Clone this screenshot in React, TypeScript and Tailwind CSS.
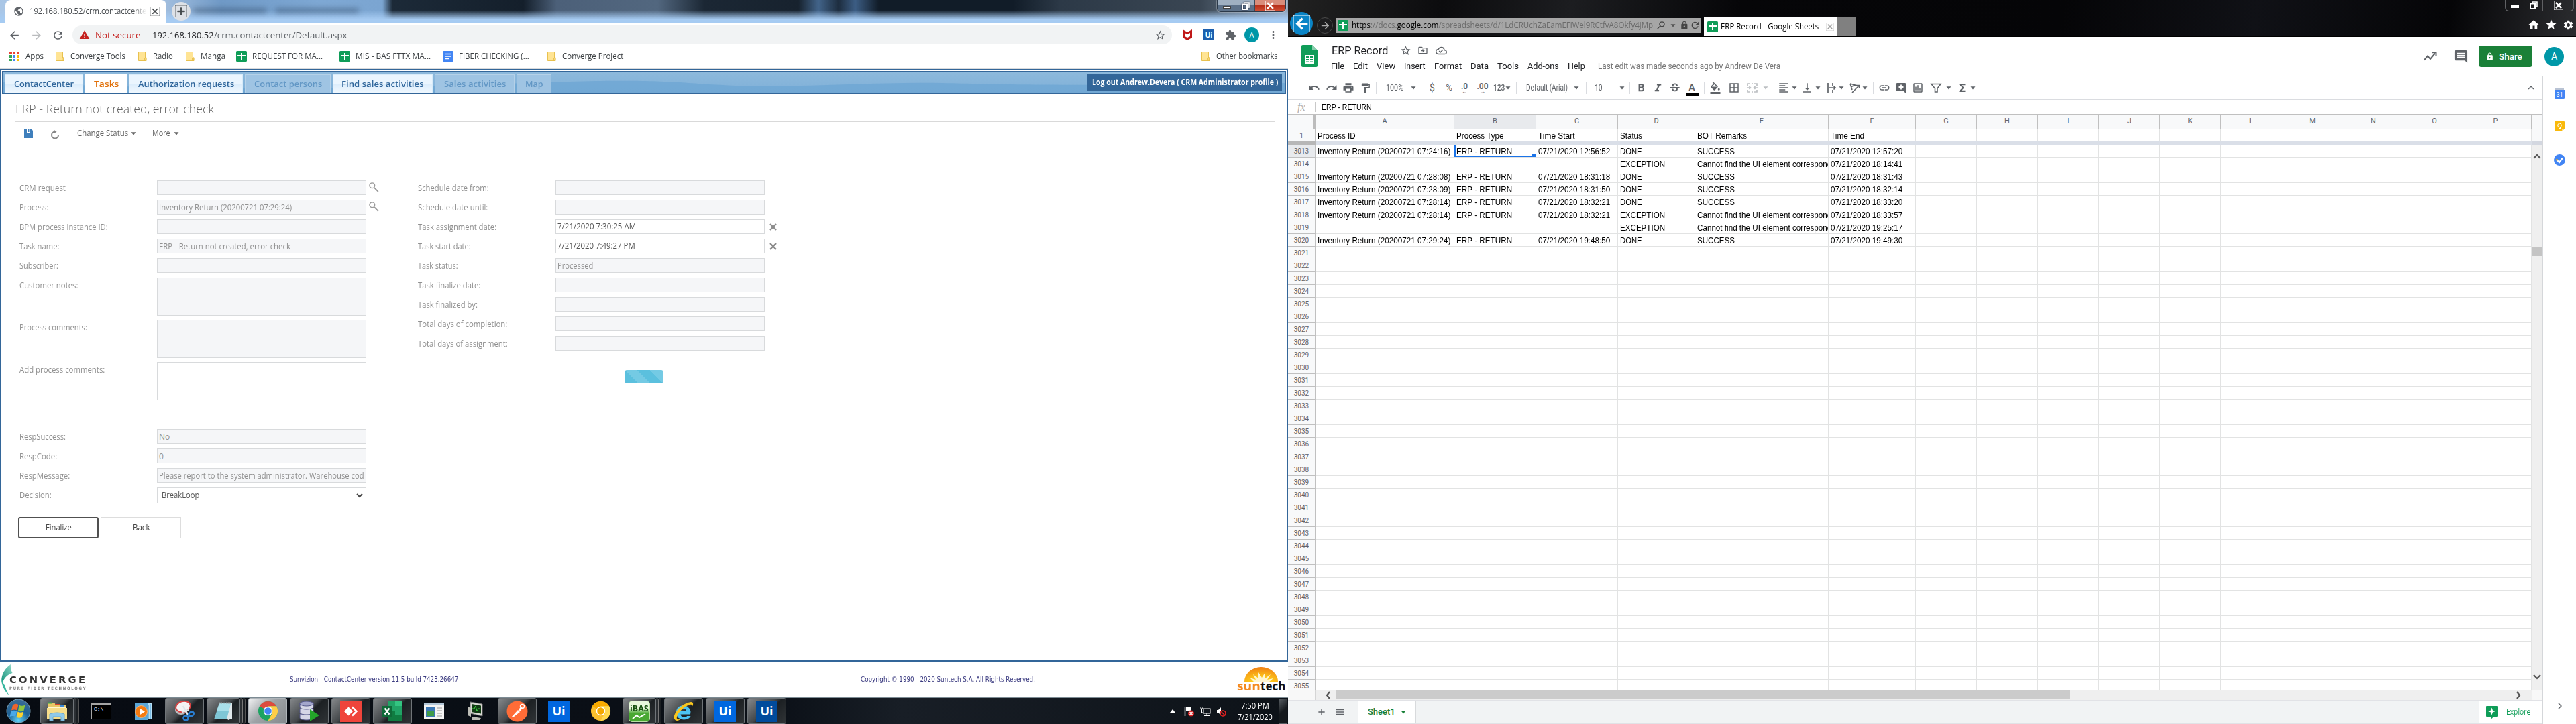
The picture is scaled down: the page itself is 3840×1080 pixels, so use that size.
import React, { useLayoutEffect, useRef, useState } from "react";
import {
  MdUndo, MdRedo, MdPrint, MdFormatPaint, MdFormatBold, MdFormatItalic, MdStrikethroughS,
  MdFormatColorFill, MdBorderAll, MdFormatAlignLeft, MdVerticalAlignBottom, MdInsertLink,
  MdFunctions, MdStarBorder, MdOutlineDriveFileMove, MdOutlineCloudDone,
  MdComment, MdLock, MdExtension, MdArrowBack, MdArrowForward, MdRefresh, MdMoreVert,
  MdOutlineInsertChart, MdHome, MdStar, MdExpandLess, MdKeyboardArrowRight, MdSearch,
  MdWarning, MdPublic, MdSettings, MdAdd, MdClose, MdMenu,
} from "react-icons/md";

const UI = "font-['Open_Sans','Noto_Sans',sans-serif]";
const ROBOTO = "font-['Roboto',sans-serif]";
const ARIAL = "font-['Liberation_Sans',sans-serif]";

/** Single-line text condensed or widened to occupy exactly w pixels. */
function Fit({ w, className = "", children }: { w: number; className?: string; children: React.ReactNode }) {
  const ref = useRef<HTMLSpanElement>(null);
  const [s, setS] = useState(1);
  useLayoutEffect(() => {
    if (ref.current && ref.current.offsetWidth) setS(w / ref.current.offsetWidth);
  }, [w]);
  return (
    <span className={"block shrink-0 whitespace-nowrap " + className} style={{ width: w }}>
      <span ref={ref} className="inline-block origin-left align-top" style={{ transform: `scaleX(${s})` }}>{children}</span>
    </span>
  );
}

/* ---------- shared small icons ---------- */
const Folder = ({ className = "" }) => (
  <svg className={"shrink-0 " + className} width="13" height="14" viewBox="0 0 13 14">
    <path d="M.5.5h10v10l1.500-1v4H.5z" fill="#ffe494" stroke="#e8c14f" />
    <path d="M9.500 13.300V9.800l2.300-1.200v4.700z" fill="#f7d674" stroke="#e3b93f" strokeWidth=".7" />
  </svg>
);
const SheetsSmall = ({ className = "" }) => (
  <svg className={"shrink-0 " + className} width="16" height="16" viewBox="0 0 16 16">
    <rect width="16" height="16" rx="1.500" fill="#0f9d58" />
    <path d="M7 3h2v3h5v2H9v5H7V8H2V6h5z" fill="#fff" />
  </svg>
);
const Caret = ({ className = "text-[#5f6368]" }) => (
  <svg className={"shrink-0 " + className} width="8" height="5" viewBox="0 0 8 5"><path d="M0.500 0.300h7L4 4.600z" fill="currentColor" /></svg>
);
const Restore = ({ className = "" }) => (
  <svg className={className} width="12" height="12" viewBox="0 0 12 12" fill="none" stroke="#fff" strokeWidth="1.600"><path d="M4 2.500V1h7v7H9" /><rect x="1" y="3.500" width="7" height="7.500" strokeWidth="2" /></svg>
);

/* ---------- left: Chrome window ---------- */
function ChromeTop() {
  return (
    <div className={UI}>
      <div className="flex h-[34px] bg-[linear-gradient(to_bottom,transparent_45%,#a6cbf2_85%),linear-gradient(to_right,#a9c6e6_0,#9fbcdd_250px,#6f99c6_330px,#7ea8d4_480px,#7ba5d1_570px,#1c2a38_585px,#141f2b_780px,#4c6079_830px,#52677f_980px,#1b2734_1050px,#17222e_1190px,#42648a_1220px,#1d2d3f_1250px,#3c5d84_1275px,#111c28_1310px,#111c28_1510px,#2c3947_1580px,#3a4653_1790px,#8fa2b8_1920px)]">
        <div className="ml-2 flex h-[34px] w-[240px] items-center rounded-t-lg bg-white">
          <MdPublic className="ml-[12px] size-[16px] text-[#5f6368]" />
          <div className="ml-[8px] w-[174px] overflow-hidden [mask-image:linear-gradient(to_right,#000_88%,transparent)]">
            <Fit w={174} className="text-[12px] leading-[18px] text-[#45494d]">192.168.180.52/crm.contactcente</Fit>
          </div>
          <MdClose className="ml-[6px] size-[14px] stroke-[#3c4043] stroke-1 text-[#3c4043]" />
        </div>
        <div className="mt-[3px] ml-2 flex size-[28px] items-center justify-center rounded-full bg-[#dee1e6]">
          <MdAdd className="size-[18px] stroke-[#3c4043] stroke-1 text-[#3c4043]" />
        </div>
        <div className="mt-[13px] ml-1 h-[6px] w-[110px] rounded bg-[#24384f]/50 blur-[4px]" />
        <div className="mt-[13px] ml-3 h-[6px] w-[125px] rounded bg-[#24384f]/50 blur-[4px]" />
        <div className="mr-[3px] ml-auto flex h-[18px] w-[103px] overflow-hidden rounded-b-md border border-t-0 border-[#2c3a4a] shadow-[0_0_2px_#fff]">
          <div className="flex w-[28px] items-center justify-center border-r border-[#3b4959] bg-[linear-gradient(#9fb0c2_50%,#5d728a_50%)]"><span className="mt-1 h-[4px] w-[12px] border border-[#444] bg-white" /></div>
          <div className="flex w-[28px] items-center justify-center border-r border-[#3b4959] bg-[linear-gradient(#9fb0c2_50%,#5d728a_50%)]"><Restore className="drop-shadow-[0_0_1px_#223]" /></div>
          <div className="flex grow items-center justify-center bg-[linear-gradient(#d98d7b_45%,#b8301a_50%,#cf5136)] text-white"><MdClose className="size-[15px] stroke-white stroke-2" /></div>
        </div>
      </div>
      <div className="flex h-[36px] items-center bg-white text-[#5f6368]">
        <MdArrowBack className="ml-[12px] size-[19px] shrink-0" />
        <MdArrowForward className="ml-[14px] size-[19px] shrink-0 text-[#babcbe]" />
        <MdRefresh className="ml-[13px] size-[19px] shrink-0" />
        <div className="ml-[12px] flex h-[28px] w-[1639px] items-center rounded-full bg-[#f1f3f4] text-[13.5px] leading-[20px]">
          <MdWarning className="ml-[10px] size-[16px] text-[#c5221f]" />
          <Fit w={67} className="ml-[8px] text-[#c5221f]">Not secure</Fit>
          <div className="ml-[8px] h-[16px] w-px bg-[#9aa0a6]" />
          <Fit w={92} className="ml-[9px] text-[#202124]">192.168.180.52</Fit>
          <Fit w={198}>/crm.contactcenter/Default.aspx</Fit>
          <MdStarBorder className="mr-[9px] ml-auto size-[17px]" />
        </div>
        <svg className="ml-[16px]" width="14" height="16" viewBox="0 0 14 16"><path d="M0 0l7 4 7-4v12l-7 4-7-4zM3 5v5l4 2 4-2V5L7 7z" fill="#c01818" fillRule="evenodd" /></svg>
        <div className="ml-[17px] flex size-[16px] items-center justify-center bg-[#1b5fae] text-[10px] font-bold text-white">Ui</div>
        <MdExtension className="ml-[16px] size-[17px]" />
        <div className="ml-[12px] flex size-[22px] items-center justify-center rounded-full bg-[#0097a7] text-[11px] text-white">A</div>
        <MdMoreVert className="ml-[12px] size-[18px]" />
      </div>
      <div className="flex h-[33px] items-center border-b border-[#d9dadc] bg-white pb-[4px] text-[12px] leading-[18px] text-[#3c4043]">
        <div className="ml-[14px] grid grid-cols-3 gap-[2px]">
          {["bg-[#ea4335]", "bg-[#ea4335]", "bg-[#ea4335]", "bg-[#34a853]", "bg-[#4285f4]", "bg-[#fbbc04]", "bg-[#34a853]", "bg-[#4285f4]", "bg-[#fbbc04]"].map((c, i) => <i key={i} className={"size-[3.5px] " + c} />)}
        </div>
        <Fit w={27} className="ml-[9px]">Apps</Fit>
        <Folder className="ml-[18px]" /><Fit w={82} className="ml-[9px]">Converge Tools</Fit>
        <Folder className="ml-[19px]" /><Fit w={30} className="ml-[9px]">Radio</Fit>
        <Folder className="ml-[19px]" /><Fit w={37} className="ml-[9px]">Manga</Fit>
        <SheetsSmall className="ml-[16px]" /><Fit w={105} className="ml-[8px]">REQUEST FOR MA...</Fit>
        <SheetsSmall className="ml-[25px]" /><Fit w={112} className="ml-[8px]">MIS - BAS FTTX MA...</Fit>
        <svg className="ml-[18px] shrink-0" width="16" height="16" viewBox="0 0 16 16"><rect width="16" height="16" rx="1.500" fill="#4285f4" /><path d="M3 4.500h10M3 8h10M3 11.500h6" stroke="#fff" strokeWidth="1.600" /></svg>
        <Fit w={105} className="ml-[8px]">FIBER CHECKING (...</Fit>
        <Folder className="ml-[27px]" /><Fit w={91} className="ml-[9px]">Converge Project</Fit>
        <div className="ml-auto h-[16px] w-px bg-[#c6c8ca]" />
        <Folder className="ml-[12px]" /><Fit w={92} className="mr-[15px] ml-[9px]">Other bookmarks</Fit>
      </div>
    </div>
  );
}

type NavTab = { label: string; tw: number; box: string; kind: "on" | "link" | "off" };
const NAV: NavTab[] = [
  { label: "ContactCenter", tw: 89, box: "w-[117px]", kind: "link" },
  { label: "Tasks", tw: 37, box: "w-[62px]", kind: "on" },
  { label: "Authorization requests", tw: 143, box: "w-[170px]", kind: "link" },
  { label: "Contact persons", tw: 101, box: "w-[128px]", kind: "off" },
  { label: "Find sales activities", tw: 123, box: "w-[149px]", kind: "link" },
  { label: "Sales activities", tw: 92, box: "w-[119px]", kind: "off" },
  { label: "Map", tw: 27, box: "w-[52px]", kind: "off" },
];
const NAV_STYLE = {
  on: "bg-white text-[#e17009]",
  link: "border border-b-0 border-[#d8ebf9] bg-[linear-gradient(#eaf5fe_50%,#dcedfb_50%,#f2f9ff)] text-[#30669b]",
  off: "border border-b-0 border-[#b5d1e8] bg-[#9fc4e3] text-[#6297c5]",
};

const HL = "h-px bg-[#d9d9d9]";
const label = "text-[12px] leading-[23px] text-[#919191]";
const box = "h-[22px] w-[312px] shrink-0 overflow-hidden border border-[#d8dadc] bg-[#f5f6f8] pl-[2px] text-[12px] leading-[21px] text-[#919191]";
const editBox = "h-[22px] w-[312px] shrink-0 border border-[#d8dadc] bg-white pl-[2px] text-[12px] leading-[20px] text-[#555]";
const area = "h-[57px] w-[312px] border border-[#d8dadc]";

const Magnifier = () => (
  <svg className="ml-[4px]" width="15" height="15" viewBox="0 0 15 15" fill="none" stroke="#999">
    <circle cx="4.800" cy="4.800" r="3.900" strokeWidth="1.300" /><path d="M7.800 7.800l6 6" strokeWidth="1.900" />
  </svg>
);

function Field({ name, w, value, vw = 0, find }: { name: string; w: number; value?: string; vw?: number; find?: boolean }) {
  return (
    <div className="flex h-[22px]">
      <div className="w-[205px] shrink-0"><Fit w={w} className={label}>{name}</Fit></div>
      <div className={box}>{value && <Fit w={vw}>{value}</Fit>}</div>
      {find && <div className="pt-[3px]"><Magnifier /></div>}
    </div>
  );
}
function AreaField({ name, w, white }: { name: string; w: number; white?: boolean }) {
  return (
    <div className="flex">
      <div className="w-[205px]"><Fit w={w} className={label}>{name}</Fit></div>
      <div className={area + (white ? " bg-white" : " bg-[#f5f6f8]")} />
    </div>
  );
}

const DATES: { n: string; w: number; v?: string; vw?: number; edit?: boolean }[] = [
  { n: "Schedule date from:", w: 106 },
  { n: "Schedule date until:", w: 104 },
  { n: "Task assignment date:", w: 117, v: "7/21/2020 7:30:25 AM", vw: 117, edit: true },
  { n: "Task start date:", w: 79, v: "7/21/2020 7:49:27 PM", vw: 116, edit: true },
  { n: "Task status:", w: 60, v: "Processed", vw: 53 },
  { n: "Task finalize date:", w: 93 },
  { n: "Task finalized by:", w: 89 },
  { n: "Total days of completion:", w: 133 },
  { n: "Total days of assignment:", w: 134 },
];

function Crm() {
  return (
    <div className={"h-[884px] border border-b-2 border-[#336699] bg-white " + UI}>
      <div className="relative mx-[2px] mt-[2px] h-[34px] overflow-hidden border border-[#336699] bg-[linear-gradient(#8db9dc,#7fb0d8)]">
        <svg className="absolute inset-0" width="1914" height="32" viewBox="0 0 1914 32" preserveAspectRatio="none">
          <path d="M0 16C300 28 500 28 750 18S1000 18 1100 21S1300 15 1400 17S1550 22 1914 17V32H0z" fill="#6ea6d3" opacity=".8" />
        </svg>
        <div className="relative flex items-start pt-[4px] pl-[3px]">
          <div className="flex gap-[3px]">
            {NAV.map((t) => (
              <div key={t.label} className={"flex h-[29px] items-center justify-center text-[12px] leading-[18px] font-semibold " + t.box + " " + NAV_STYLE[t.kind]}>
                <Fit w={t.tw}>{t.label}</Fit>
              </div>
            ))}
          </div>
          <div className="-mt-[1px] mr-[5px] ml-auto flex h-[26px] w-[290px] items-center justify-center bg-[#336699] text-[12px] leading-[16px] font-bold text-white">
            <Fit w={277}><span className="underline">Log out Andrew.Devera ( CRM Administrator profile )</span></Fit>
          </div>
        </div>
      </div>
      <div className="mr-[19px] ml-[22px]">
        <div className="flex h-[41px] items-end pb-[7px]"><Fit w={296} className="text-[17.5px] leading-[24px] font-light text-[#666]">ERP - Return not created, error check</Fit></div>
        <div className={HL} />
        <div className="flex h-[34px] items-center text-[12px] leading-[18px] text-[#666]">
          <svg className="ml-[13px]" width="13" height="13" viewBox="0 0 13 13"><path d="M0 0h4v5h5V0h2l2 2v11H0z" fill="#3f7fbc" /><path d="M5.500 0h2v4h-2z" fill="#3f7fbc" /></svg>
          <svg className="ml-[26px] mt-[2px]" width="14" height="15" viewBox="0 0 14 15" fill="none" stroke="#858585" strokeWidth="2"><path d="M7 3.500a5 5 0 105 5" /><path d="M5 0.500l4.500 3-4.500 3.200z" fill="#858585" stroke="none" /></svg>
          <Fit w={76} className="ml-[26px]">Change Status</Fit>
          <Caret className="ml-[4px] text-[#666]" />
          <Fit w={27} className="ml-[24px]">More</Fit>
          <Caret className="ml-[5px] text-[#666]" />
        </div>
        <div className={HL} />
      </div>
      <div className="mt-[52px] ml-[28px] flex">
        <div className="w-[594px]">
          <div className="flex flex-col gap-[7px]">
            <Field name="CRM request" w={69} find />
            <Field name="Process:" w={43} value="Inventory Return (20200721 07:29:24)" vw={198} find />
            <Field name="BPM process instance ID:" w={132} />
            <Field name="Task name:" w={59} value="ERP - Return not created, error check" vw={196} />
            <Field name="Subscriber:" w={58} />
          </div>
          <div className="mt-[7px] flex flex-col gap-[6px]">
            <AreaField name="Customer notes:" w={87} />
            <AreaField name="Process comments:" w={101} />
            <AreaField name="Add process comments:" w={127} white />
          </div>
          <div className="mt-[43px] flex flex-col gap-[7px]">
            <Field name="RespSuccess:" w={69} value="No" vw={16} />
            <Field name="RespCode:" w={56} value="0" vw={7} />
            <Field name="RespMessage:" w={75} value="Please report to the system administrator. Warehouse cod" vw={306} />
            <div className="flex">
              <div className="w-[205px]"><Fit w={48} className={label}>Decision:</Fit></div>
              <div className="flex h-[24px] w-[312px] items-center border border-[#d8dadc] pl-[6px] text-[12px] leading-[18px] text-[#555]">
                <Fit w={56}>BreakLoop</Fit>
                <svg className="mr-[4px] ml-auto" width="10" height="7" viewBox="0 0 10 7"><path d="M1 1l4 4 4-4" fill="none" stroke="#444" strokeWidth="2" /></svg>
              </div>
            </div>
          </div>
          <div className="mt-[20px] -ml-[2px] flex gap-[3px] text-[12px] leading-[18px] text-[#444]">
            <div className="flex h-[32px] w-[120px] items-center justify-center rounded-[3px] border-2 border-[#505050]"><Fit w={39}>Finalize</Fit></div>
            <div className="flex h-[32px] w-[120px] items-center justify-center border border-[#ddd]"><Fit w={25}>Back</Fit></div>
          </div>
        </div>
        <div>
          <div className="flex flex-col gap-[7px]">
            {DATES.map((d) => (
              <div key={d.n} className="flex h-[22px] items-center">
                <div className="w-[205px]"><Fit w={d.w} className={label}>{d.n}</Fit></div>
                <div className={d.edit ? editBox : box}>{d.v && <Fit w={d.vw ?? 0}>{d.v}</Fit>}</div>
                {d.edit && <svg className="ml-[7px]" width="11" height="11" viewBox="0 0 11 11"><path d="M1 1l9 9M10 1l-9 9" stroke="#8b8b8b" strokeWidth="2.400" /></svg>}
              </div>
            ))}
          </div>
          <div className="mt-[29px] ml-[309px] h-[20px] w-[56px] rounded-[2px] border-b border-[#45a7c8] bg-[repeating-linear-gradient(45deg,#5bc0de_0_13px,#74cae4_13px_26px)]" />
        </div>
      </div>
    </div>
  );
}

function CrmFooter() {
  return (
    <div className="flex h-[53px] items-center bg-white font-['DejaVu_Sans',sans-serif] text-[10px] leading-[15px] text-[#3b3b80]">
      <div className="flex h-[46px] w-[430px] items-center">
        <svg className="ml-[2px] shrink-0" width="20" height="46" viewBox="0 0 20 46">
          <defs><linearGradient id="leaf" x1="0" y1="1" x2="1" y2="0"><stop offset="0" stopColor="#0f8f78" /><stop offset="1" stopColor="#8fd8c8" /></linearGradient></defs>
          <path d="M14 0C3 8-2 19 1.500 31c1-9 6-15 15-18-2-4-3-8-2.500-13z" fill="url(#leaf)" />
          <path d="M.5 20c-.5 12 4 20 11 26-3-5-5-9-6-14C3 29 1 25 .5 20z" fill="#38b7a0" />
        </svg>
        <div className="-ml-[8px] flex flex-col gap-[2px] pt-[9px]">
          <Fit w={116} className="text-[14px] leading-[14px] font-bold tracking-[3px] text-[#333]">CONVERGE</Fit>
          <Fit w={115} className="text-[6px] leading-[7px] font-bold tracking-[2px] text-[#777]">PURE FIBER TECHNOLOGY</Fit>
        </div>
      </div>
      <Fit w={251} className="ml-[2px]">Sunvizion - ContactCenter version 11.5 build 7423.26647</Fit>
      <Fit w={260} className="ml-[600px]">Copyright © 1990 - 2020 Suntech S.A. All Rights Reserved.</Fit>
      <div className="mr-[4px] ml-auto flex flex-col items-center">
        <svg width="50" height="23" viewBox="0 0 50 23">
          <defs><radialGradient id="sun" cx=".5" cy="1" r="1"><stop offset=".2" stopColor="#ffd21a" /><stop offset="1" stopColor="#f07d13" /></radialGradient></defs>
          <path d="M0 23A25 22 0 0150 23z" fill="url(#sun)" />
          <path d="M14 23L8 17l9 3-4-8 8 6 0-9 5 8 5-8 0 9 8-6-5 8 9-2-6 5z" fill="#fff5d0" />
        </svg>
        <div className={"flex h-[16px] text-[17px] leading-[14px] font-bold " + UI}><Fit w={35} className="text-[#f58a1f]">sun</Fit><Fit w={37} className="text-[#111]">tech</Fit></div>
      </div>
    </div>
  );
}

function Slot({ framed, lit, stack, children }: { framed?: boolean; lit?: boolean; stack?: boolean; children: React.ReactNode }) {
  const frame = lit
    ? "border border-[#aeb4b9] bg-[linear-gradient(135deg,#f0f1f2,#9ea3a7_45%,#85898d)]"
    : framed
      ? "border border-[#6f7478] bg-[linear-gradient(135deg,#85888b,#43474a_45%,#1c2023_55%,#303437)]"
      : "border border-transparent";
  return (
    <div className="flex h-[39px] w-[58px]">
      <div className={"flex grow items-center justify-center rounded-[3px] " + frame}>{children}</div>
      {stack && <><div className="w-[4px] rounded-r border-r border-[#777] bg-[#2b2f33]" /><div className="w-[4px] rounded-r border-r border-[#555] bg-[#1b1f23]" /></>}
    </div>
  );
}
const UiTile = ({ dark }: { dark?: boolean }) => (
  <div className={"flex size-[32px] items-center justify-center text-[18px] font-bold text-white " + (dark ? "bg-[#004b9c]" : "bg-[#0067df]")}>Ui</div>
);
const Disc = ({ a, b, c, core }: { a: string; b: string; c: string; core: string }) => (
  <svg width="31" height="31" viewBox="-16 -16 32 32">
    <circle r="15" fill={b} />
    <path d="M0 0L-13 -7.500A15 15 0 0113 -7.500H0z" fill={a} />
    <path d="M0 -7.500H13A15 15 0 010 15L6.500 3.500z" fill={c} />
    <circle r="7" fill="#fff" /><circle r="5.500" fill={core} />
  </svg>
);

function Taskbar() {
  return (
    <div className={"flex h-[40px] border-t border-[#7c8b93] bg-[linear-gradient(to_right,#070b12,#0b1017_60%,#181e26_70%,#0d1218)] " + UI}>
      <div className="flex w-[60px] items-center justify-start pl-[9px]">
        <svg width="37" height="37" viewBox="0 0 37 37">
          <defs><radialGradient id="orb" cx=".5" cy=".9" r=".9"><stop offset="0" stopColor="#5fd0f5" /><stop offset=".5" stopColor="#1c6196" /><stop offset="1" stopColor="#3d6c94" /></radialGradient></defs>
          <circle cx="18.500" cy="18.500" r="17.500" fill="url(#orb)" stroke="#7fa6bb" />
          <path d="M10 9.500q4-3 8.500-.5l-2 8.500q-4-2-8.500 0z" fill="#f0642c" />
          <path d="M19.500 9.500q4 2.500 9 0l-2 8.500q-4 2.500-8.500 0z" fill="#8dc63f" />
          <path d="M7.700 18.800q4-2 8.500 0L14 27q-4-2-8.500 0z" fill="#4aa8e8" />
          <path d="M17.500 19.500q4 2.500 8.500 0l-2 8.300q-4 2-8.500 0z" fill="#fdd12e" />
        </svg>
      </div>
      <div className="flex gap-[4px]">
        <Slot framed stack>
          <svg width="32" height="30" viewBox="0 0 32 30">
            <path d="M2 2h10l2 3h16v22H2z" fill="#e8c766" /><path d="M3 2.500h6" stroke="#2fae4a" strokeWidth="2" /><path d="M13 5h7" stroke="#d9442b" strokeWidth="2" /><path d="M21 7h6" stroke="#3b8ad8" strokeWidth="2" />
            <path d="M3 8h26v16H3z" fill="#fff6cf" /><path d="M1 10h30v17H1z" fill="#f6dd8a" /><path d="M5 29V19q11-4 22 0v10h-5v-6H10v6z" fill="#8fc9ea" stroke="#6ba9cf" />
          </svg>
        </Slot>
        <Slot><div className="h-[25px] w-[30px] border border-t-[3px] border-[#a5a5a5] bg-black pl-[3px] font-['Liberation_Mono',monospace] text-[8px] leading-[14px] text-white">C:\_</div></Slot>
        <Slot>
          <svg width="27" height="28" viewBox="0 0 27 28"><rect x="6" y="1" width="20" height="24" fill="#b6dff5" /><path d="M24 3v22M21 4v22" stroke="#3e95cf" /><rect x="1" y="2" width="19" height="25" fill="#5aa7d8" /><circle cx="10.500" cy="14.500" r="9" fill="#f47b12" stroke="#f7b272" /><path d="M8 9.500l8 5-8 5z" fill="#fff" /></svg>
        </Slot>
        <Slot framed>
          <svg width="32" height="32" viewBox="0 0 32 32"><ellipse cx="11" cy="14" rx="9" ry="7" fill="#b9bcbf" /><ellipse cx="14" cy="9" rx="11" ry="8" transform="rotate(-15 14 9)" fill="#f4f4f4" stroke="#d84343" strokeWidth="2" /><path d="M14 8l7 13M12 17l11-3" stroke="#e2e7ea" strokeWidth="2.500" /><circle cx="18" cy="26" r="3.500" fill="none" stroke="#2a7ed0" strokeWidth="2.600" /><ellipse cx="26" cy="20" rx="4" ry="3" transform="rotate(-30 26 20)" fill="none" stroke="#2a7ed0" strokeWidth="2.600" /></svg>
        </Slot>
        <Slot framed stack>
          <svg width="32" height="30" viewBox="0 0 32 30"><path d="M11 3h18v23l-6 2z" fill="#dfe7ea" /><path d="M10 3h17l-6 24H2z" fill="#7fc6d6" /><path d="M10 3h17l-3 11H6z" fill="#a9dfea" /><path d="M10 2.500h17" stroke="#999" strokeWidth="2" strokeDasharray="1.500 1" /></svg>
        </Slot>
        <Slot lit><Disc a="#dd4b3e" b="#1da362" c="#ffcd46" core="#4285f4" /></Slot>
        <Slot framed>
          <svg width="32" height="32" viewBox="0 0 32 32"><g fill="#d5d6e6" stroke="#54578a"><path d="M2 20v6c0 4 20 4 20 0v-6z" /><path d="M2 12v6c0 4 20 4 20 0v-6z" /><path d="M2 4v6c0 4 20 4 20 0V4z" /><ellipse cx="12" cy="4.500" rx="10" ry="3.500" fill="#a3a6cc" /></g><path d="M17 13l14 9-14 9z" fill="#24a52a" /></svg>
        </Slot>
        <Slot framed>
          <div className="flex size-[32px] items-center justify-center bg-[#ef443b]"><svg width="22" height="16" viewBox="0 0 22 16"><path d="M7.500 1.500L14 8l-6.500 6.500L1 8z" fill="#fff" /><path d="M13 1.500L19.500 8 13 14.500" fill="none" stroke="#fff" strokeWidth="2.500" /></svg></div>
        </Slot>
        <Slot framed>
          <svg width="32" height="31" viewBox="0 0 32 31"><path d="M9 1h22v29H9z" fill="#21a366" /><path d="M20 1h11v7H20z" fill="#33c481" /><path d="M9 15h22v15H9z" fill="#107c41" /><path d="M20 15h11v7H20z" fill="#21a366" /><rect y="8" width="16" height="16" fill="#0f6a38" /><path d="M4.500 11.500l7 9M11.500 11.500l-7 9" stroke="#fff" strokeWidth="2.200" /></svg>
        </Slot>
        <Slot>
          <svg width="30" height="25" viewBox="0 0 30 25"><rect width="30" height="25" fill="#f4f4f4" /><rect width="30" height="3" fill="#b3c7d8" /><rect x="3" y="6" width="13" height="15" fill="#3c78b5" /><rect x="4" y="13" width="11" height="7" fill="#3f9b4a" /><path d="M19 8h8M19 12h8M19 16h8M19 20h8" stroke="#999" /></svg>
        </Slot>
        <Slot>
          <svg width="30" height="30" viewBox="0 0 30 30"><path d="M7 1l18 3v18L7 18z" fill="#d8d8d2" stroke="#777" /><path d="M9 4l14 2.500v12L9 16z" fill="#103a12" /><path d="M10 11h3l2-4 2 8 2-4h3" fill="none" stroke="#42d742" /><path d="M3 8l5 2v13l-5-2zM10 23l13 2-2 3H9z" fill="#bdbdb6" /></svg>
        </Slot>
        <Slot framed>
          <svg width="32" height="32" viewBox="0 0 32 32"><circle cx="16" cy="16" r="15.500" fill="#ff6c37" /><path d="M7 25l10-11 3 3-9 7zM18 13l4-4 2 2-4 5z" fill="#fff" /><circle cx="23.500" cy="8.500" r="3" fill="none" stroke="#fff" strokeWidth="1.400" /></svg>
        </Slot>
        <Slot><UiTile /></Slot>
        <Slot><Disc a="#f9ab00" b="#fbc02d" c="#ffd94f" core="#f4a900" /></Slot>
        <Slot framed stack>
          <div className="flex h-[32px] w-[32px] flex-col items-center rounded-[5px] border border-[#b9e0a4] bg-[linear-gradient(#e6f7dc_35%,#49a832_60%)] pt-[4px] text-[12px] leading-[14px] font-bold text-[#14500f]">
            <Fit w={28}>iBAS</Fit>
            <svg width="22" height="9" viewBox="0 0 22 9"><path d="M1 8l6-5 4 3 9-5" fill="none" stroke="#fff" strokeWidth="2" /></svg>
          </div>
        </Slot>
        <Slot framed>
          <svg width="32" height="32" viewBox="0 0 32 32"><path d="M26 20.500H11.500c.5 5 7.500 6 9.500 2.500h5.500C24 30.500 5 31.500 5 17.500S25 4.500 26.500 16.500zM11.500 15H20c-.5-4.500-8-4.500-8.500 0z" fill="#4cc3f2" /><path d="M2 27C-1 20 14 3 27 2c4 0 4 4 1 8 1-4 0-5-3-4C15 9 4 22 6 27c1 2 4 1 6 0-4 4-8 4-10 0z" fill="#f9c61d" /></svg>
        </Slot>
        <Slot framed><UiTile /></Slot>
        <Slot framed><UiTile dark /></Slot>
      </div>
      <div className="ml-auto flex items-center text-white">
        <svg width="8" height="5" viewBox="0 0 8 5"><path d="M0 5h8L4 0z" fill="#fff" /></svg>
        <svg className="ml-[13px]" width="16" height="16" viewBox="0 0 16 16"><path d="M1.500 1v14" stroke="#fff" strokeWidth="1.500" /><path d="M3 2h7v6H3z" fill="#fff" /><circle cx="10.500" cy="11" r="4.500" fill="#d81e1e" /><path d="M8.500 9l4 4M12.500 9l-4 4" stroke="#fff" strokeWidth="1.200" /></svg>
        <svg className="ml-[8px]" width="16" height="16" viewBox="0 0 16 16" fill="none" stroke="#fff"><rect x="5" y="4" width="10" height="7" /><path d="M10 11v3M6 14.500h8M1 1v3h3V1M2.500 4v6H5" /></svg>
        <svg className="ml-[8px]" width="16" height="16" viewBox="0 0 16 16"><path d="M1 6h2l4-4v12l-4-4H1z" fill="#fff" /><circle cx="10" cy="11" r="4" fill="none" stroke="#e02020" strokeWidth="1.600" /><path d="M7.500 8.500l5 5" stroke="#e02020" strokeWidth="1.600" /></svg>
        <div className="ml-[15px] flex w-[54px] flex-col items-center text-[12px] leading-[17px]">
          <Fit w={42}>7:50 PM</Fit>
          <Fit w={52}>7/21/2020</Fit>
        </div>
        <div className="mr-[1px] ml-[8px] h-[38px] w-[13px] border border-[#555d63] bg-[linear-gradient(135deg,#555b60,#15191d_50%)]" />
      </div>
    </div>
  );
}

/* ---------- right: Internet Explorer with the spreadsheet ---------- */
function IeTop() {
  return (
    <div className={"h-[55px] border-b border-black bg-[linear-gradient(100deg,#222_0,#0c0c0e_12%,#1c1d20_22%,#060608_35%,#050507_60%,#101116_75%,#050507_90%,#2b2c2f)] " + UI}>
      <div className="flex h-[54px] items-end border-b border-[#5c7378]">
        <div className="mb-px ml-[3px] flex size-[34px] items-center justify-center self-end rounded-full bg-[#0a84c6]"><MdArrowBack className="size-[25px] stroke-white stroke-1 text-white" /></div>
        <div className="mb-[3px] ml-[6px] flex size-[24px] items-center justify-center rounded-full border border-[#4a4a4a] bg-[#1d1d1f]"><MdArrowForward className="size-[17px] text-[#aaa]" /></div>
        <div className="mb-[4px] ml-[5px] flex h-[22px] w-[543px] items-center bg-[#a6a6a6] text-[12.5px] leading-[18px] text-[#6b6b6b]">
          <SheetsSmall className="ml-[2px]" />
          <Fit w={449} className="ml-[5px]"><span className="text-black">https</span>://docs.<span className="text-black">google.com</span>/spreadsheets/d/1LdCRUchZaEamEFiWel9RCtfvA8Okfy4jMp</Fit>
          <MdSearch className="ml-[4px] size-[16px] -scale-x-100 text-[#444]" />
          <Caret className="ml-[6px] text-[#555]" />
          <MdLock className="ml-[6px] size-[14px] text-[#444]" />
          <MdRefresh className="ml-[2px] size-[16px] text-[#444]" />
        </div>
        <div className="ml-[5px] flex h-[27px] w-[198px] items-center bg-white text-[12.5px] leading-[18px] text-black">
          <SheetsSmall className="ml-[5px]" />
          <Fit w={146} className="ml-[4px]">ERP Record - Google Sheets</Fit>
          <MdClose className="ml-[11px] size-[12px] stroke-[#999] stroke-1 text-[#999]" />
        </div>
        <div className="ml-px h-[27px] w-[28px] bg-[#808080]" />
        <div className="mr-[3px] ml-auto flex h-[54px] w-[103px] flex-col">
          <div className="flex h-[18px] rounded-b-md border border-t-0 border-[#606164]">
            <div className="flex w-[28px] items-center justify-center border-r border-[#606164]"><span className="mt-1 h-[4px] w-[12px] bg-white" /></div>
            <div className="flex w-[28px] items-center justify-center border-r border-[#606164]"><Restore /></div>
            <div className="flex grow items-center justify-center text-white"><MdClose className="size-[14px] stroke-white stroke-2" /></div>
          </div>
          <div className="flex grow items-center justify-end gap-[8px] pt-[4px] text-white"><MdHome className="size-[18px]" /><MdStar className="size-[18px]" /><MdSettings className="size-[17px]" /></div>
        </div>
      </div>
    </div>
  );
}

const MENU: [string, number][] = [["File", 20], ["Edit", 22], ["View", 28], ["Insert", 32], ["Format", 41], ["Data", 27], ["Tools", 32], ["Add-ons", 47], ["Help", 26]];

function SheetHeader() {
  return (
    <div className={"flex h-[58px] bg-white " + ROBOTO}>
      <svg className="mt-[12px] ml-[20px] shrink-0" width="24" height="33" viewBox="0 0 24 33"><path d="M2 0h14l8 8v23a2 2 0 01-2 2H2a2 2 0 01-2-2V2a2 2 0 012-2z" fill="#0f9d58" /><path d="M16 0l8 8h-8z" fill="#87ceac" /><path d="M5 15h14v13H5zM7 17v2h4v-2zm6 0v2h4v-2zm-6 4v1.500h4V21zm6 0v1.500h4V21zm-6 3.500V26h4v-1.500zm6 0V26h4v-1.500z" fill="#fff" fillRule="evenodd" /></svg>
      <div className="ml-[20px] flex flex-col">
        <div className="mt-[8px] flex h-[24px] items-center text-[#5f6368]">
          <Fit w={84} className="ml-[1px] text-[17px] leading-[22px] text-[#202124]">ERP Record</Fit>
          <MdStarBorder className="ml-[18px] size-[17px]" />
          <MdOutlineDriveFileMove className="ml-[9px] size-[16px]" />
          <MdOutlineCloudDone className="ml-[11px] size-[17px]" />
        </div>
        <div className="mt-[2px] flex gap-[13px] text-[13.5px] leading-[18px] text-[#202124]">
          {MENU.map(([m, w]) => <Fit key={m} w={w}>{m}</Fit>)}
          <Fit w={272} className="ml-[6px] text-[#777]"><span className="underline">Last edit was made seconds ago by Andrew De Vera</span></Fit>
        </div>
      </div>
      <div className="mr-[18px] ml-auto flex items-center text-[#5f6368]">
        <svg width="20" height="14" viewBox="0 0 20 14" fill="none" stroke="currentColor" strokeWidth="2"><path d="M1 12.500l5-6 4 4.500 7-8.500" /><path d="M13 1.200h5.500v5" /></svg>
        <MdComment className="ml-[24px] size-[23px]" />
        <div className="ml-[15px] flex h-[32px] w-[80px] items-center rounded-[4px] bg-[#1a8038] text-[13.5px] leading-[18px] font-medium text-white"><MdLock className="ml-[10px] size-[13px]" /><Fit w={35} className="ml-[7px]">Share</Fit></div>
        <div className="ml-[18px] flex size-[29px] items-center justify-center rounded-full bg-[#0097a7] text-[14px] text-white">A</div>
      </div>
    </div>
  );
}

const Div = ({ className = "" }) => <div className={"h-[18px] w-px shrink-0 bg-[#dadce0] " + className} />;
const Glyph = ({ className = "", children }: { className?: string; children: React.ReactNode }) => (
  <span className={"flex w-[18px] shrink-0 items-center justify-center " + className}>{children}</span>
);

function SheetToolbar() {
  const c = "ml-[3px] shrink-0 text-[#5f6368]";
  return (
    <div className={"flex h-[36px] items-center border-y border-[#dadce0] bg-white text-[12px] leading-[16px] text-[#5f6368] [&_svg]:shrink-0 " + ROBOTO}>
      <MdUndo className="ml-[30px] size-[18px]" />
      <MdRedo className="ml-[8px] size-[18px]" />
      <MdPrint className="ml-[7px] size-[18px]" />
      <MdFormatPaint className="ml-[8px] size-[17px]" />
      <Div className="ml-[7px]" />
      <Fit w={26} className="ml-[14px]">100%</Fit><Caret className="ml-[11px]" />
      <Div className="ml-[7px]" />
      <Glyph className="ml-[7px] text-[14px]">$</Glyph>
      <Glyph className="ml-[7px] text-[13px]">%</Glyph>
      <span className="ml-[5px] flex w-[18px] flex-col items-center leading-[10px] font-medium">.0<span className="h-[5px] text-[8px] leading-[5px]">←</span></span>
      <span className="ml-[8px] flex w-[20px] flex-col items-center leading-[10px] font-medium">.00<span className="h-[5px] text-[8px] leading-[5px]">→</span></span>
      <Fit w={17} className="ml-[6px] font-medium">123</Fit><Caret className="ml-px" />
      <Div className="ml-[8px]" />
      <Fit w={62} className="ml-[14px]">Default (Arial)</Fit><Caret className="ml-[9px]" />
      <Div className="ml-[10px]" />
      <Fit w={12} className="ml-[12px]">10</Fit><Caret className="ml-[25px]" />
      <Div className="ml-[7px]" />
      <MdFormatBold className="ml-[7px] size-[19px]" />
      <MdFormatItalic className="ml-[6px] size-[19px]" />
      <MdStrikethroughS className="ml-[6px] size-[19px]" />
      <span className="ml-[7px] flex w-[18px] flex-col items-center pt-[5px] text-[15px] leading-[15px] font-medium">A<span className="h-[4px] w-[19px] bg-black" /></span>
      <Div className="ml-[9px]" />
      <MdFormatColorFill className="ml-[7px] size-[18px]" />
      <MdBorderAll className="ml-[10px] size-[18px]" />
      <svg className="ml-[9px] text-[#bdc0c3]" width="18" height="14" viewBox="0 0 18 14" fill="none" stroke="currentColor" strokeWidth="1.700"><path d="M2 4V1h4M9 1h1M12 1h4v3M2 10v3h4M9 13h1M12 13h4v-3M1 7h5M12 7h5M4.500 5l2 2-2 2M13.500 5l-2 2 2 2" /></svg>
      <Caret className="ml-[7px] text-[#bdc0c3]" />
      <Div className="ml-[8px]" />
      <MdFormatAlignLeft className="ml-[5px] size-[18px]" /><Caret className={c} />
      <MdVerticalAlignBottom className="ml-[6px] size-[18px]" /><Caret className={c} />
      <svg className="ml-[7px]" width="18" height="14" viewBox="0 0 18 14" fill="none" stroke="currentColor" strokeWidth="1.700"><path d="M4 0v14M11 0v4M11 10v4M6 7h9M12.500 4.500L15 7l-2.500 2.500" /></svg>
      <Caret className="ml-[2px] text-[#5f6368]" />
      <svg className="ml-[7px]" width="18" height="16" viewBox="0 0 18 16" fill="none" stroke="currentColor" strokeWidth="1.600"><path d="M2 2l11 3M2 2l3 9M3 7l6-3M5 15L15 5M11.500 4.500L15.500 4.500 15.500 8.500" /></svg>
      <Caret className="ml-[2px] text-[#5f6368]" />
      <Div className="ml-[8px]" />
      <MdInsertLink className="ml-[7px] size-[18px]" />
      <svg className="ml-[7px]" width="18" height="16" viewBox="0 0 18 16"><path d="M3 1h12a1 1 0 011 1v14l-3-3H3a1 1 0 01-1-1V2a1 1 0 011-1z" fill="currentColor" /><path d="M9 3.500v7M5.500 7h7" stroke="#fff" strokeWidth="1.800" /></svg>
      <MdOutlineInsertChart className="ml-[7px] size-[18px]" />
      <svg className="ml-[9px]" width="18" height="14" viewBox="0 0 18 14" fill="none" stroke="currentColor" strokeWidth="1.600"><path d="M2 1.500h14L11 8v5H7.500V8z" /></svg>
      <Caret className="ml-[6px]" />
      <MdFunctions className="ml-[7px] size-[18px]" />
      <Caret className={c} />
      <MdExpandLess className="mr-[8px] ml-auto size-[18px]" />
    </div>
  );
}

const COLS: [string, string][] = [
  ["A", "w-[207px]"], ["B", "w-[122px]"], ["C", "w-[122px]"], ["D", "w-[115px]"], ["E", "w-[199px]"], ["F", "w-[130px]"],
  ..."GHIJKLMNOP".split("").map((l): [string, string] => [l, "w-[91px]"]),
  ["", "grow"],
];
const CANT = "Cannot find the UI element correspond";
const DATA: string[][] = [
  ["Inventory Return (20200721 07:24:16)", "ERP - RETURN", "07/21/2020 12:56:52", "DONE", "SUCCESS", "07/21/2020 12:57:20"],
  ["", "", "", "EXCEPTION", CANT, "07/21/2020 18:14:41"],
  ["Inventory Return (20200721 07:28:08)", "ERP - RETURN", "07/21/2020 18:31:18", "DONE", "SUCCESS", "07/21/2020 18:31:43"],
  ["Inventory Return (20200721 07:28:09)", "ERP - RETURN", "07/21/2020 18:31:50", "DONE", "SUCCESS", "07/21/2020 18:32:14"],
  ["Inventory Return (20200721 07:28:14)", "ERP - RETURN", "07/21/2020 18:32:21", "DONE", "SUCCESS", "07/21/2020 18:33:20"],
  ["Inventory Return (20200721 07:28:14)", "ERP - RETURN", "07/21/2020 18:32:21", "EXCEPTION", CANT, "07/21/2020 18:33:57"],
  ["", "", "", "EXCEPTION", CANT, "07/21/2020 19:25:17"],
  ["Inventory Return (20200721 07:29:24)", "ERP - RETURN", "07/21/2020 19:48:50", "DONE", "SUCCESS", "07/21/2020 19:49:30"],
];
const HEAD = ["Process ID", "Process Type", "Time Start", "Status", "BOT Remarks", "Time End"];
const TEXT_W: Record<string, number> = {
  "Process ID": 57, "Process Type": 71, "Time Start": 54, Status: 33, "BOT Remarks": 74, "Time End": 50,
  "ERP - RETURN": 83, DONE: 33, EXCEPTION: 67, SUCCESS: 56, [CANT]: 200,
};
const widthOf = (t: string) => TEXT_W[t] ?? (t.startsWith("Inventory") ? 198 : 107);

function Row({ n, cells, first, active }: { n: number; cells?: string[]; first?: boolean; active?: boolean }) {
  return (
    <div className={"flex shrink-0 " + (first ? "h-[18px]" : "h-[19px]")}>
      <div className={"flex w-[41px] shrink-0 items-center justify-center border-r border-b border-[#c0c0c0] text-[10px] text-[#5f6368] " + ROBOTO + (active ? " bg-[#e8eaed]" : " bg-[#f8f9fa]") + (first ? " border-b-0" : "")}>{n}</div>
      {COLS.map(([l, w], i) => (
        <div key={l} className={"relative shrink-0 overflow-hidden border-r border-b border-[#e2e3e3] pl-[3px] text-[13px] leading-[20px] text-black " + w + (first ? " border-b-0" : "")}>
          {cells && cells[i] && <Fit w={widthOf(cells[i])}>{cells[i]}</Fit>}
          {active && i === 1 && <div className="absolute inset-0 border-b-2 border-l-2 border-[#1a73e8]"><i className="absolute right-0 -bottom-[2px] size-[5px] bg-[#1a73e8]" /></div>}
        </div>
      ))}
    </div>
  );
}

const Chevron = ({ d, className = "" }: { d: string; className?: string }) => (
  <svg className={"shrink-0 " + className} width="12" height="12" viewBox="0 0 12 12"><path d={d} fill="none" stroke="#555" strokeWidth="2.200" /></svg>
);

function Grid() {
  return (
    <div className={"flex h-[874px] " + ARIAL}>
      <div className="flex w-[1854px] flex-col">
        <div className="flex h-[23px] shrink-0 border-t border-b border-[#c0c0c0]">
          <div className="w-[41px] shrink-0 border-r-4 border-[#bcbcbc] bg-[#f8f9fa]" />
          {COLS.map(([l, w]) => (
            <div key={l} className={"flex shrink-0 items-center justify-center border-r border-[#c0c0c0] text-[11px] text-[#5f6368] " + ROBOTO + " " + w + (l === "B" ? " bg-[#e8eaed]" : " bg-[#f8f9fa]")}>{l}</div>
          ))}
        </div>
        <Row n={1} cells={HEAD} first />
        <div className="flex h-[5px] shrink-0"><div className="w-[41px] bg-[#b7b7b7]" /><div className="grow bg-[#dadfe8]" /></div>
        <div className="flex h-[813px] shrink-0 flex-col overflow-hidden">
          {Array.from({ length: 43 }, (_, i) => <Row key={i} n={3013 + i} cells={DATA[i]} active={i === 0} />)}
        </div>
        <div className="flex h-[15px] shrink-0 items-center bg-[#efefef]">
          <div className="h-full w-[41px] border-r border-[#d5d5d5] bg-[#f8f8f8]" />
          <Chevron className="ml-[13px]" d="M8 1L4 6l4 5" />
          <div className="ml-[6px] h-[14px] w-[1094px] self-start bg-[#cbcbcb]" />
          <Chevron className="mr-[14px] ml-auto" d="M4 1l4 5-4 5" />
        </div>
      </div>
      <div className="flex w-[16px] flex-col items-center border-x border-[#dcdcdc] bg-[#efefef]">
        <div className="h-[41px] w-full border-t border-[#c0c0c0] bg-[#f8f9fa]" />
        <div className="h-[5px] w-full bg-[#d3d7e0]" />
        <Chevron className="mt-[12px]" d="M1 8l5-5 5 5" />
        <div className="mt-[128px] h-[14px] w-full bg-[#c4c4c4]" />
        <Chevron className="mt-auto" d="M1 4l5 5 5-5" />
        <div className="mt-[14px] h-[15px] w-full border-t border-[#d5d5d5] bg-[#f8f8f8]" />
      </div>
    </div>
  );
}

function SheetTabs() {
  return (
    <div className={"flex h-[36px] items-stretch border-y border-[#e1e2e6] bg-[#f1f3f4] text-[#5f6368] " + ROBOTO}>
      <MdAdd className="ml-[42px] size-[16px] self-center" />
      <MdMenu className="ml-[12px] size-[16px] self-center" />
      <div className="ml-[18px] flex w-[87px] items-center border-r border-[#d8dadc] bg-white text-[13px] leading-[18px] font-medium text-[#188038]">
        <Fit w={41} className="ml-[15px]">Sheet1</Fit><Caret className="ml-[8px] text-[#188038]" />
      </div>
      <div className={"ml-auto flex w-[95px] items-center border-l border-[#b5b7b9] bg-white text-[12px] leading-[18px] text-[#0f9d58] " + UI}>
        <svg className="ml-[10px]" width="17" height="19" viewBox="0 0 17 19"><path d="M1 0h15a1 1 0 011 1v14a1 1 0 01-1 1h-5l-2.500 3L6 16H1a1 1 0 01-1-1V1a1 1 0 011-1z" fill="#0f9d58" /><path d="M8.500 2.500l1.400 4.100L14 8l-4.100 1.400-1.400 4.100-1.400-4.100L3 8l4.100-1.400z" fill="#fff" /></svg>
        <Fit w={36} className="ml-[13px]">Explore</Fit>
      </div>
    </div>
  );
}

export default function App() {
  return (
    <div className="flex h-[1080px] w-[3840px] overflow-hidden bg-white">
      <div className="w-[1920px] shrink-0">
        <ChromeTop />
        <Crm />
        <CrmFooter />
        <Taskbar />
      </div>
      <div className="w-[1920px] shrink-0">
        <IeTop />
        <SheetHeader />
        <div className="flex h-[967px]">
          <div className="w-[1870px] shrink-0">
            <SheetToolbar />
            <div className={"flex h-[21px] items-center bg-white text-[12.5px] leading-[18px] " + ARIAL}>
              <span className="ml-[14px] w-[14px] font-['Liberation_Serif',serif] text-[16px] leading-[16px] text-[#b0b0b0] italic">fx</span>
              <div className="ml-[12px] h-[15px] w-px bg-[#c8c8c8]" />
              <Fit w={75} className="ml-[9px] text-black">ERP - RETURN</Fit>
            </div>
            <Grid />
            <SheetTabs />
          </div>
          <div className="flex w-[50px] flex-col items-center border-l border-[#d5d7da] bg-white">
            <svg className="mt-[18px] shrink-0" width="15" height="16" viewBox="0 0 15 16"><path d="M0 3h15v11.500a1.500 1.500 0 01-1.500 1.500h-12A1.500 1.500 0 010 14.500z" fill="#4285f4" /><path d="M1 0h13v3H0z" fill="#b9c3d4" /><text x="7.500" y="12.500" fontSize="9" textAnchor="middle" fill="#fff" fontFamily="Roboto">31</text></svg>
            <svg className="mt-[34px] shrink-0" width="15" height="15" viewBox="0 0 15 15"><path d="M1 0h13a1 1 0 011 1v10l-4 4H1a1 1 0 01-1-1V1a1 1 0 011-1z" fill="#f9b90b" /><path d="M15 11l-4 4v-4z" fill="#fde08a" /><circle cx="7.500" cy="6" r="2.800" fill="none" stroke="#fff" /><path d="M6 10.500h3M6.500 8.500v3h2v-3" fill="none" stroke="#fff" /></svg>
            <svg className="mt-[34px] shrink-0" width="17" height="17" viewBox="0 0 17 17"><circle cx="8.500" cy="8.500" r="8.500" fill="#4285f4" /><path d="M5 9l3 3 5-6.500" fill="none" stroke="#fff" strokeWidth="2.200" /><circle cx="4.500" cy="8.300" r="1.400" fill="#fbbc04" /></svg>
            <MdKeyboardArrowRight className="mt-auto mb-[18px] size-[18px] text-[#5f6368]" />
          </div>
        </div>
      </div>
    </div>
  );
}
